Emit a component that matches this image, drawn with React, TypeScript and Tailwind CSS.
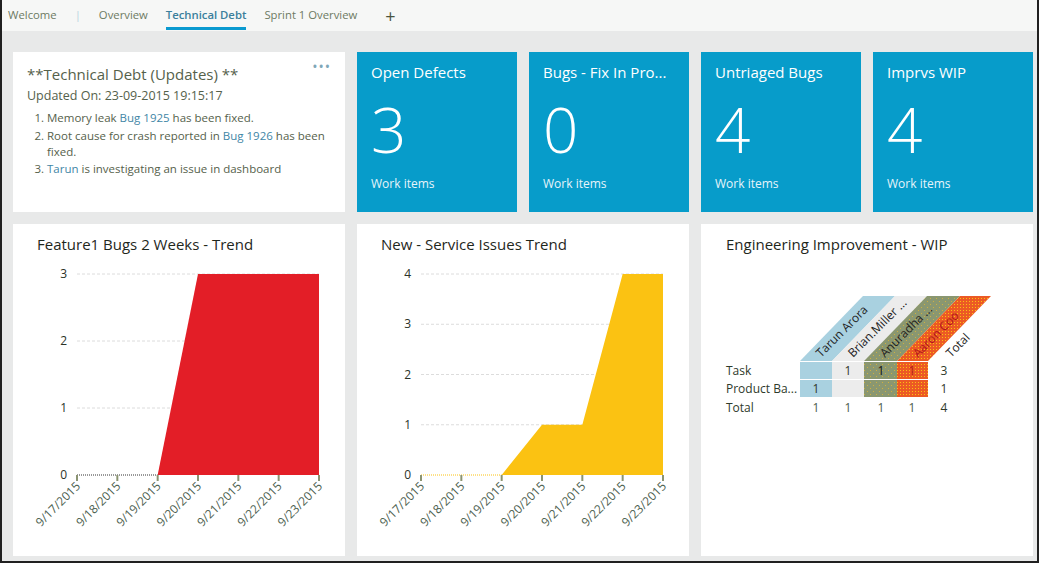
import React from "react";

const FONT = { fontFamily: '"Open Sans", "Noto Sans", Arial, sans-serif' };

function Tab({ label, active }: { label: string; active?: boolean }) {
  return (
    <div className="relative flex h-full items-center">
      <span className={active ? "font-semibold text-[#3b7f9c]" : "text-[#6d7a63]"}>{label}</span>
      {active && <div className="absolute bottom-[1px] left-0 right-0 h-[3px] bg-[#0a9ad0]" />}
    </div>
  );
}

function Tile({ title, value }: { title: string; value: string }) {
  return (
    <div className="flex flex-col bg-[#079cca] pl-[14px] pr-[8px] pt-[10px] text-white">
      <div className="whitespace-nowrap text-[15px] leading-[20px]">{title}</div>
      <div className="mt-[12px] text-[62px] font-light leading-[70px]">{value}</div>
      <div className="mt-[12px] text-[12px] leading-[16px] text-[#e6f4fa]">Work items</div>
    </div>
  );
}

const dates = ["9/17/2015", "9/18/2015", "9/19/2015", "9/20/2015", "9/21/2015", "9/22/2015", "9/23/2015"];

function TrendChart({
  title,
  values,
  max,
  color,
  baseColor,
}: {
  title: string;
  values: number[];
  max: number;
  color: string;
  baseColor: string;
}) {
  const x0 = 64;
  const x1 = 306;
  const yTop = 20;
  const yBot = 221;
  const step = (x1 - x0) / (values.length - 1);
  const X = (i: number) => x0 + i * step;
  const Y = (v: number) => yBot - (v / max) * (yBot - yTop);
  const firstNonZero = values.findIndex((v) => v > 0);
  const start = Math.max(firstNonZero - 1, 0);
  const pts = values
    .map((v, i) => (i >= start ? `${X(i)},${Y(v)}` : null))
    .filter(Boolean)
    .join(" ");
  const poly = `${X(start)},${yBot} ${pts} ${X(values.length - 1)},${yBot}`;
  const ticks = Array.from({ length: max + 1 }, (_, i) => i);
  return (
    <div className="flex flex-col bg-white">
      <div className="pl-[24px] pt-[10px] text-[15px] leading-[20px] text-[#1f271c]">{title}</div>
      <svg width={332} height={302} className="block" style={FONT}>
        {ticks.map((t) => (
          <g key={t}>
            {t > 0 && (
              <line x1={x0} x2={x1} y1={Y(t)} y2={Y(t)} stroke="#dcdcdc" strokeDasharray="3 2" strokeWidth={1} />
            )}
            <text x={x0 - 10} y={Y(t) + 4} fontSize={12} textAnchor="end" fill="#2b3328">
              {t}
            </text>
          </g>
        ))}
        <polygon points={poly} fill={color} />
        <line x1={x0} x2={X(start)} y1={yBot} y2={yBot} stroke={baseColor} strokeWidth={1} strokeDasharray="1 1" />
        {dates.map((d, i) => (
          <g key={d}>
            <line x1={X(i)} x2={X(i)} y1={yBot} y2={yBot + 6} stroke="#8b9472" strokeWidth={2} />
            <text
              x={X(i) + 4}
              y={yBot + 12}
              fontSize={12}
              textAnchor="end"
              fill="#4d6150"
              transform={`rotate(-45 ${X(i) + 4} ${yBot + 12})`}
            >
              {d}
            </text>
          </g>
        ))}
      </svg>
    </div>
  );
}

function Pivot() {
  const bands = [
    { x: 99, w: 32, color: "#a9d1e0", label: "Tarun Arora" },
    { x: 131, w: 32, color: "#ececec", label: "Brian.Miller ..." },
    { x: 163, w: 33, color: "#8a9770", label: "Anuradha ..." },
    { x: 196, w: 31, color: "#ef6a22", label: "Aaron Coo" },
  ];
  const top = 41;
  const bot = 106;
  const slant = 63;
  const r1 = 107;
  const r2 = 125;
  const rh = 17;
  const text = "#2e3a2b";
  const fillFor = (i: number, c: string) => (i === 2 ? "url(#olivedots)" : i === 3 ? "url(#reddots)" : c);
  return (
    <svg width={332} height={200} className="block" style={FONT}>
      <defs>
        <pattern id="olivedots" width="6" height="6" patternUnits="userSpaceOnUse">
          <rect width="6" height="6" fill="#8a9770" />
          <rect x="1" y="1" width="1" height="1" fill="#d0b040" />
          <rect x="4" y="4" width="1" height="1" fill="#d0b040" />
        </pattern>
        <pattern id="reddots" width="3" height="3" patternUnits="userSpaceOnUse">
          <rect width="3" height="3" fill="#ec5a24" />
          <rect x="1" y="1" width="1" height="1" fill="#fbc212" />
        </pattern>
      </defs>
      {bands.map((b, i) => (
        <g key={b.label}>
          <polygon
            points={`${b.x},${bot} ${b.x + b.w},${bot} ${b.x + b.w + slant},${top} ${b.x + slant},${top}`}
            fill={fillFor(i, b.color)}
          />
          <text
            x={b.x + 21}
            y={bot - 3}
            fontSize={12}
            fill={i === 3 ? "#b0121a" : "#222"}
            transform={`rotate(-45 ${b.x + 21} ${bot - 3})`}
          >
            {b.label}
          </text>
        </g>
      ))}
      <text x={250} y={bot - 3} fontSize={12} fill="#222" transform={`rotate(-45 250 ${bot - 3})`}>
        Total
      </text>
      {bands.map((b, i) => (
        <g key={"c" + i}>
          <rect x={b.x} y={r1} width={b.w} height={rh} fill={fillFor(i, b.color)} />
          <rect x={b.x} y={r2} width={b.w} height={rh} fill={fillFor(i, b.color)} />
        </g>
      ))}
      <text x={25} y={r1 + 13} fontSize={12} fill={text}>Task</text>
      <text x={25} y={r2 + 13} fontSize={12} fill={text}>Product Ba...</text>
      <text x={25} y={157} fontSize={12} fill={text}>Total</text>
      <text x={147} y={r1 + 13} fontSize={12} fill={text} textAnchor="middle">1</text>
      <text x={180} y={r1 + 13} fontSize={12} fill="#111" textAnchor="middle">1</text>
      <text x={211} y={r1 + 13} fontSize={12} fill="#b0121a" textAnchor="middle">1</text>
      <text x={243} y={r1 + 13} fontSize={12} fill={text} textAnchor="middle">3</text>
      <text x={115} y={r2 + 13} fontSize={12} fill={text} textAnchor="middle">1</text>
      <text x={243} y={r2 + 13} fontSize={12} fill={text} textAnchor="middle">1</text>
      {[115, 147, 180, 211].map((x) => (
        <text key={x} x={x} y={157} fontSize={12} fill="#4d5d4a" textAnchor="middle">1</text>
      ))}
      <text x={243} y={157} fontSize={12} fill={text} textAnchor="middle">4</text>
    </svg>
  );
}

export default function App() {
  return (
    <div
      className="flex h-[563px] w-[1039px] flex-col overflow-hidden border-x-2 border-b-2 border-[#202020] bg-[#e8e9e9]"
      style={FONT}
    >
      <div className="flex h-[31px] shrink-0 items-center gap-[18px] bg-[#f6f7f6] pl-[6px] text-[11.3px]">
        <Tab label="Welcome" />
        <span className="text-[#b8d4e0]">|</span>
        <Tab label="Overview" />
        <Tab label="Technical Debt" active />
        <Tab label="Sprint 1 Overview" />
        <span className="ml-[10px] text-[18px] leading-none text-[#4a5440]">+</span>
      </div>
      <div className="grid grid-cols-[repeat(6,160px)] grid-rows-[160px_332px] gap-[12px] pl-[11px] pt-[21px]">
        <div className="relative col-span-2 bg-white px-[14px] pt-[12px] text-[#55614b]">
          <div className="absolute right-[14px] top-[4px] text-[14px] tracking-[1px] text-[#7fa7b8]">•••</div>
          <div className="text-[15px] leading-[20px]">**Technical Debt (Updates) **</div>
          <div className="mt-[3px] text-[12.5px] leading-[18px]">Updated On: 23-09-2015 19:15:17</div>
          <ol className="mt-[5px] list-decimal pl-[20px] text-[11.5px] leading-[16px]">
            <li className="mb-[2px]">
              Memory leak <span className="text-[#3f86a6]">Bug 1925</span> has been fixed.
            </li>
            <li className="mb-[1px]">
              Root cause for crash reported in <span className="text-[#3f86a6]">Bug 1926</span> has been fixed.
            </li>
            <li>
              <span className="text-[#3f86a6]">Tarun</span> is investigating an issue in dashboard
            </li>
          </ol>
        </div>
        <Tile title="Open Defects" value="3" />
        <Tile title="Bugs - Fix In Pro..." value="0" />
        <Tile title="Untriaged Bugs" value="4" />
        <Tile title="Imprvs WIP" value="4" />
        <div className="col-span-2">
          <TrendChart title="Feature1 Bugs 2 Weeks - Trend" values={[0, 0, 0, 3, 3, 3, 3]} max={3} color="#e31e27" baseColor="#333" />
        </div>
        <div className="col-span-2">
          <TrendChart title="New - Service Issues Trend" values={[0, 0, 0, 1, 1, 4, 4]} max={4} color="#fbc212" baseColor="#fbc212" />
        </div>
        <div className="col-span-2 flex flex-col bg-white">
          <div className="pl-[25px] pt-[10px] text-[15px] leading-[20px] text-[#1f271c]">Engineering Improvement - WIP</div>
          <div className="mt-[1px]">
            <Pivot />
          </div>
        </div>
      </div>
    </div>
  );
}
